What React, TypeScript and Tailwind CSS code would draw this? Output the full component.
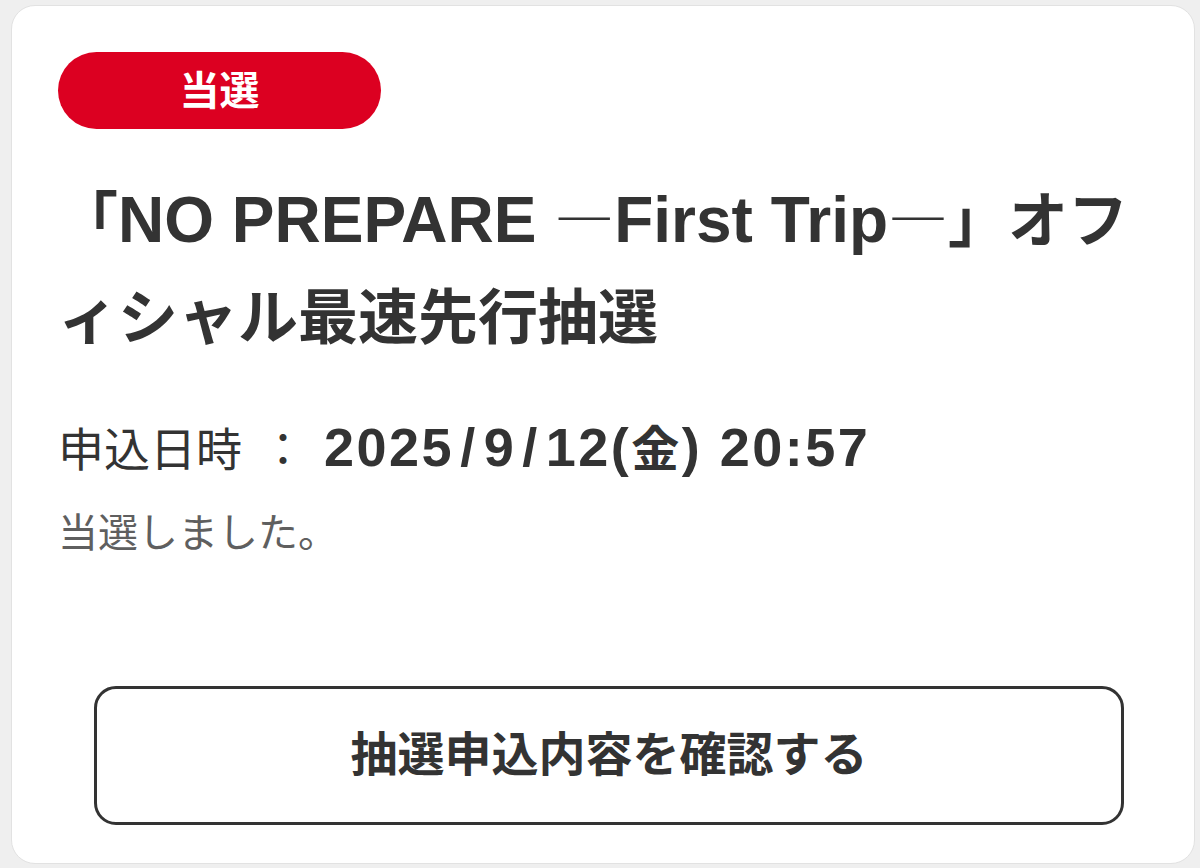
import React from 'react'

const font = {
  fontFamily: '"Liberation Sans", "Noto Sans CJK JP", sans-serif',
}

// thin full-width bar as the japanese font draws it
const Dash = () => (
  <span className="font-['Noto_Sans_CJK_JP'] text-[60px] font-normal leading-none">―</span>
)

const LotteryResultCard = () => {
  return (
    <div className="ml-[11px] mr-[5px] mt-[5px] h-[859px] rounded-[24px] border border-[#e2e2e2] bg-white pl-[46px] pr-[44px] pt-[46px]">
      <div className="flex h-[77px] w-[323px] items-center justify-center rounded-full bg-[#dc0021] text-[40px] font-bold text-white">
        当選
      </div>

      <h2 className="mt-[44px] whitespace-nowrap text-[60px] font-bold leading-[97px] text-[#333333]">
        「<span className="text-[64px] leading-none">NO PREPARE </span>
        <Dash />
        <span className="text-[64px] leading-none">First Trip</span>
        <Dash />」オフ
        <br />
        ィシャル最速先行抽選
      </h2>

      <div className="mt-[48px] text-[46px] leading-[70px] text-[#333333]">
        <span>申込日時</span>
        <span className="mx-[18px]">：</span>
        <span className="text-[54px] font-bold leading-none tracking-[2.5px]">
          2025<span className="mx-[6px]">/</span>9<span className="mx-[6px]">/</span>12(
          <span className="text-[48px]">金</span>) 20:57
        </span>
      </div>
      <p className="mt-[18px] text-[40px] leading-[60px] text-[#5f5f5f]">
        当選しました。
      </p>

      <button className="ml-[36px] mt-[123px] flex h-[139px] w-[1030px] items-center justify-center rounded-[22px] border-[3px] border-[#333333] bg-white text-[47px] font-bold text-[#333333]">
        抽選申込内容を確認する
      </button>
    </div>
  )
}

export default function App() {
  return (
    <div className="h-[868px] w-[1200px] overflow-hidden bg-[#efefef]" style={font}>
      <LotteryResultCard />
    </div>
  )
}
